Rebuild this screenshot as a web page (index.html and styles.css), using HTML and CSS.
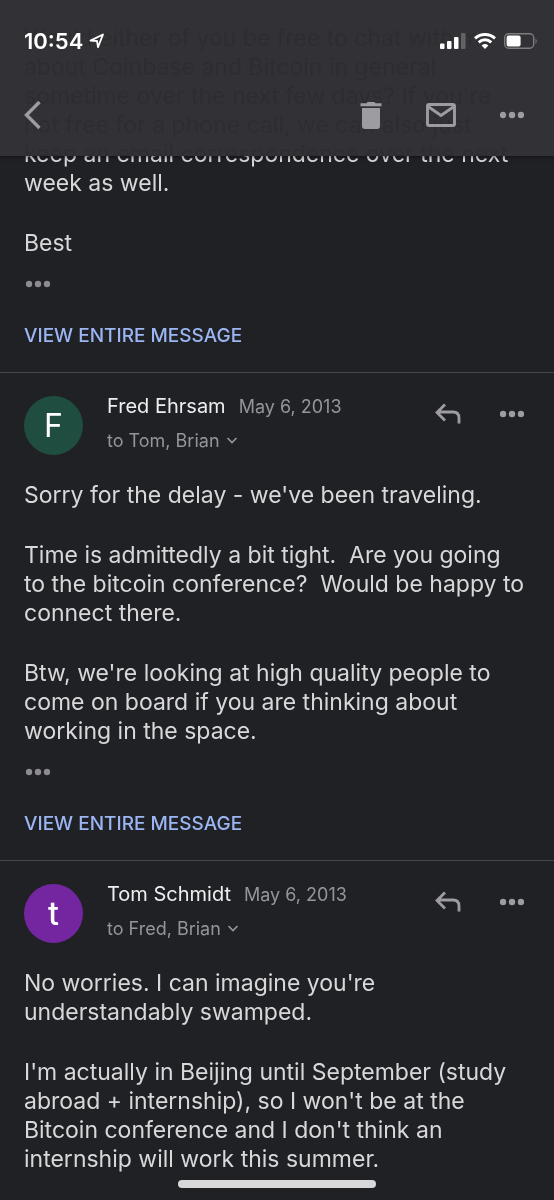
FILE: index.html
```html
<!DOCTYPE html>
<html lang="en">
<head>
<meta charset="utf-8">
<meta name="viewport" content="width=device-width, initial-scale=1">
<title>Mail conversation</title>
<link rel="stylesheet" href="styles.css">
</head>
<body>
<svg class="sprite" aria-hidden="true">
  <symbol id="dots" viewBox="0 0 24 8"><circle cx="3" cy="4" r="3.200"/><circle cx="12" cy="4" r="3.200"/><circle cx="21" cy="4" r="3.200"/></symbol>
  <symbol id="reply" viewBox="0 0 28 24"><path d="M11 2.500 3 10.500l8 8M3.500 10H19q6 0 6 6V21.500" fill="none" stroke="currentColor" stroke-width="2.800"/></symbol>
  <symbol id="chevron" viewBox="0 0 12 8"><path d="M1.500 2l4.500 4.500L10.500 2" fill="none" stroke="currentColor" stroke-width="1.700"/></symbol>
</svg>

<header class="topbar">
  <div class="status">
    <div class="clock">10:54
      <svg width="16" height="16" viewBox="0 0 16 16" aria-hidden="true"><path d="M1.500 7.600 14 1.500 9 14.200 8 8z" fill="none" stroke="currentColor" stroke-width="1.800" stroke-linejoin="round"/></svg>
    </div>
    <div class="signals">
      <svg width="26" height="16" viewBox="0 0 26 16" aria-hidden="true"><g fill="currentColor"><rect x="0" y="10.500" width="4.500" height="5.500" rx="1"/><rect x="7" y="8" width="4.500" height="8" rx="1"/><rect x="14" y="4" width="4.500" height="12" rx="1"/><rect x="21" y="0" width="4.500" height="16" rx="1" opacity=".25"/></g></svg>
      <svg width="22" height="16" viewBox="0 0 22 16" aria-hidden="true"><g fill="none" stroke="currentColor" stroke-width="2.900"><path d="M1 5.300Q5.500 1.500 11 1.500T21 5.300"/><path d="M4.700 9.400Q7.500 6.700 11 6.700T17.300 9.400"/></g><path d="M7.600 12.400Q11 9.600 14.400 12.400L11 16z" fill="currentColor"/></svg>
      <svg width="34" height="16" viewBox="0 0 34 16" aria-hidden="true"><rect x=".7" y=".7" width="29" height="14.600" rx="4" fill="none" stroke="#7d7c80" stroke-width="1.400"/><rect x="2.600" y="2.600" width="14" height="10.800" rx="2" fill="currentColor"/><path d="M31.500 5.200Q34 8 31.500 10.800z" fill="#7d7c80"/></svg>
    </div>
  </div>
  <nav class="tools" aria-label="Conversation">
    <button class="icon" type="button" aria-label="Back"><svg width="18" height="30" viewBox="0 0 18 30"><path d="M15.500 2 2.500 15l13 13" fill="none" stroke="currentColor" stroke-width="3.400"/></svg></button>
    <span class="spacer"></span>
    <button class="icon" type="button" aria-label="Delete"><svg width="22" height="27" viewBox="0 0 22 27"><path fill="currentColor" d="M.5 1.200H6.500L7.500 0H14.500L15.500 1.200H21.500V4.200H.5zM2 6H20V24Q20 27 17 27H5Q2 27 2 24z"/></svg></button>
    <button class="icon" type="button" aria-label="Mark unread"><svg width="30" height="24" viewBox="0 0 30 24"><rect x="1.500" y="1.500" width="27" height="21" rx="1.500" fill="none" stroke="currentColor" stroke-width="2.900"/><path d="M2 3.500 15 12.500 28 3.500" fill="none" stroke="currentColor" stroke-width="3"/></svg></button>
    <button class="icon" type="button" aria-label="More"><svg width="24" height="8"><use href="#dots"/></svg></button>
  </nav>
</header>

<main>
  <article class="message first">
    <div class="body">
      <p>Would either of you be free to chat with me<br>about Coinbase and Bitcoin in general<br>sometime over the next few days? If you're<br>not free for a phone call, we can also just<br>keep an email correspondence over the next<br>week as well.</p>
      <p>Best</p>
    </div>
    <button class="trimmed" type="button" aria-label="Show trimmed content"><svg width="24" height="8"><use href="#dots"/></svg></button>
    <a class="view" href="#">VIEW ENTIRE MESSAGE</a>
  </article>

  <article class="message">
    <div class="head">
      <span class="avatar green">F</span>
      <div class="who">
        <div class="line"><h2>Fred Ehrsam</h2><time datetime="2013-05-06">May 6, 2013</time></div>
        <button class="recipients" type="button">to Tom, Brian <svg width="12" height="8"><use href="#chevron"/></svg></button>
      </div>
      <div class="actions">
        <button class="icon" type="button" aria-label="Reply"><svg width="28" height="24"><use href="#reply"/></svg></button>
        <button class="icon" type="button" aria-label="More"><svg width="24" height="8"><use href="#dots"/></svg></button>
      </div>
    </div>
    <div class="body">
      <p>Sorry for the delay - we've been traveling.</p>
      <p>Time is admittedly a bit tight.&nbsp; Are you going<br>to the bitcoin conference?&nbsp; Would be happy to<br>connect there.</p>
      <p>Btw, we're looking at high quality people to<br>come on board if you are thinking about<br>working in the space.</p>
    </div>
    <button class="trimmed" type="button" aria-label="Show trimmed content"><svg width="24" height="8"><use href="#dots"/></svg></button>
    <a class="view" href="#">VIEW ENTIRE MESSAGE</a>
  </article>

  <article class="message">
    <div class="head">
      <span class="avatar purple">t</span>
      <div class="who">
        <div class="line"><h2>Tom Schmidt</h2><time datetime="2013-05-06">May 6, 2013</time></div>
        <button class="recipients" type="button">to Fred, Brian <svg width="12" height="8"><use href="#chevron"/></svg></button>
      </div>
      <div class="actions">
        <button class="icon" type="button" aria-label="Reply"><svg width="28" height="24"><use href="#reply"/></svg></button>
        <button class="icon" type="button" aria-label="More"><svg width="24" height="8"><use href="#dots"/></svg></button>
      </div>
    </div>
    <div class="body">
      <p>No worries. I can imagine you're<br>understandably swamped.</p>
      <p>I'm actually in Beijing until September (study<br>abroad + internship), so I won't be at the<br>Bitcoin conference and I don't think an<br>internship will work this summer.</p>
    </div>
  </article>
</main>
<div class="home-indicator"></div>
</body>
</html>
```
FILE: styles.css
```css
* { box-sizing: border-box; }
body {
  margin: 0;
  background: #202125;
  color: #d8d8da;
  font-family: Inter, "Liberation Sans", sans-serif;
}
button { padding: 0; border: 0; background: none; font: inherit; color: inherit; }
svg { display: block; flex: none; fill: currentColor; }
.sprite { position: absolute; width: 0; height: 0; }

/* Translucent bar that stays above the scrolling conversation */
.topbar {
  position: fixed;
  inset: 0 0 auto;
  z-index: 2;
  padding: 26px 30px 16px 24px;
  background: rgba(46, 45, 50, .98);
  backdrop-filter: invert(1);
  box-shadow: 0 1px 4px rgba(0, 0, 0, .5);
  color: #9c9ca2;
}
.status { display: flex; justify-content: space-between; align-items: center; height: 30px; color: #fff; }
.clock { display: flex; align-items: center; gap: 6px; font-size: 22px; font-weight: 600; }
.signals { display: flex; align-items: center; gap: 8px; margin-right: -14px; }
.tools { display: flex; align-items: center; gap: 44px; height: 50px; margin-top: 34px; }
.spacer { flex: 1; }
.icon { display: flex; }

.message { padding: 23px 24px; border-bottom: 1px solid #45464a; }
.message:last-child { border-bottom: 0; }
.head { display: flex; gap: 24px; height: 60px; padding-right: 6px; }
.avatar {
  display: grid;
  place-items: center;
  width: 59px;
  height: 59px;
  flex: none;
  border-radius: 50%;
  color: #fff;
  font-size: 32px;
}
.green { background: #1f4d40; }
.purple { background: #7326a0; font-weight: 500; }
.who { flex: 1; min-width: 0; }
.line { display: flex; align-items: center; gap: 13px; height: 20px; white-space: nowrap; }
h2 { margin: 0; font-size: 20px; font-weight: 400; color: #eeeef0; }
time { font-size: 18px; color: #94949a; }
.recipients { display: flex; align-items: center; gap: 6px; height: 22px; margin-top: 13px; font-size: 18px; color: #94949a; }
.actions { display: flex; align-items: center; gap: 38px; height: 36px; color: #9c9ca2; }

.body { margin-top: 25px; font-size: 23px; line-height: 29px; }
.body p { margin: 0 0 31px; }
.body p:last-child { margin-bottom: 0; }
.first .body { margin-top: 1px; }
.trimmed { display: flex; align-items: center; height: 24px; margin: 14px 0 0 2px; color: #8b8b90; }
.view {
  display: block;
  width: fit-content;
  margin-top: 27px;
  font-size: 19px;
  font-weight: 500;
  line-height: 26px;
  color: #9cb6f4;
  text-decoration: none;
}

.home-indicator {
  position: fixed;
  bottom: 12px;
  left: 50%;
  z-index: 2;
  width: 198px;
  height: 8px;
  border-radius: 4px;
  background: #d8d8da;
  transform: translateX(-50%);
}
```
